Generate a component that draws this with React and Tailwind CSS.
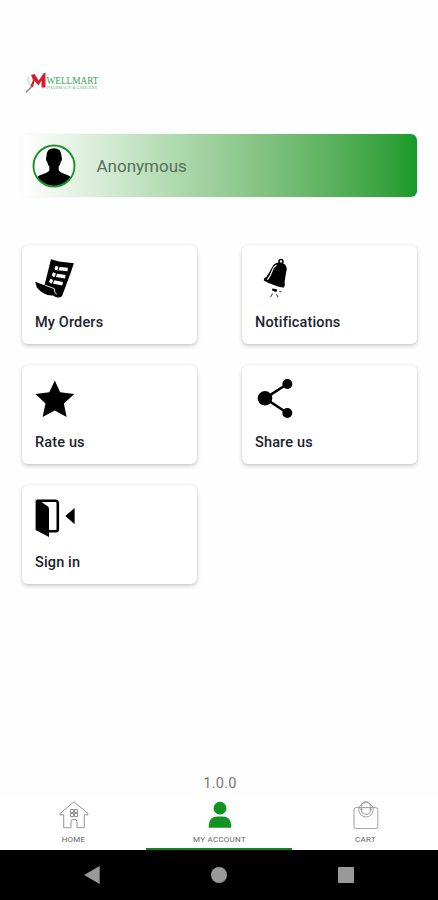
function OrdersIcon() {
  return (
    <svg viewBox="0 0 40 40" className="w-10 h-10">
      <path d="M16 1.3 24 3.6 38.8 5.2 36 14 28 35.5Q27 39.5 24 39.6 21 39.6 18 37.4 9 38.2 1.8 29.5L.2 23.8 9.5 27.3Z" />
      <path d="M10 27.2 19.3 30.6Q19 34.5 21.8 36.5" fill="none" stroke="white" strokeWidth="0.9" />
      <path d="m20.5 10.3 12.2 1.2M17.9 16.8l12.4 1.9M15 23.2l12.6 2.5" stroke="white" strokeWidth="3.5" />
      <path d="m21.9 8.2-1.4 3.2M19.2 14.8 17.8 18M16.5 21.3l-1.3 3" stroke="white" strokeWidth="2.5" />
      <path d="m24.4 8-1.5 4.4M21.7 15l-1.6 4.4M18.8 21.6l-1.5 4.4" stroke="black" strokeWidth="1.1" />
    </svg>
  )
}

function BellIcon() {
  return (
    <svg viewBox="0 0 40 40" className="w-10 h-10">
      <circle cx="26" cy="3.6" r="2" fill="none" stroke="black" strokeWidth="1.5" />
      <path d="M23.4 4.6Q28.8 4.2 31.2 8.2 32.3 10.5 31.2 14L29.8 22.5Q29.4 25 29.9 27.2L28.8 29.5Q25.5 29.7 20 27.5 13 25 8.7 22.4L9.2 20.2Q11.6 19.6 13 16.5L17.5 8.4Q19.5 5 23.4 4.6Z" />
      <path d="M21.5 7Q18.5 8.7 17.3 12.5 15.5 18 12.3 21.8" fill="none" stroke="white" strokeWidth="1.1" />
      <path d="m17 30.6 5.4 1-1 2.4-4-1.3Z" />
      <path d="m17.6 35.5-2 3.6M21.4 36.2l1.7 3M24.2 33.2l2.4.8" stroke="#555" strokeWidth="1.1" />
    </svg>
  )
}

function StarIcon() {
  return (
    <svg viewBox="0 0 40 40" className="w-10 h-10">
      <path d="m19.8 2.6 5.4 11.6 14.1 1.7-10.4 9.6 2.7 13.4-11.8-6.4-12.2 6.4 2.9-13.4L.5 15.9l13.8-1.7Z" />
    </svg>
  )
}

function ShareIcon() {
  return (
    <svg viewBox="0 0 40 40" className="w-10 h-10">
      <path d="M32.3 6 10 20.3 32.3 35" fill="none" stroke="black" strokeWidth="2.6" />
      <circle cx="10" cy="20.3" r="7.3" />
      <circle cx="32.3" cy="6" r="5" />
      <circle cx="32.3" cy="35" r="5" />
    </svg>
  )
}

function SignInIcon() {
  return (
    <svg viewBox="0 0 40 40" className="w-10 h-10">
      <path d="M2 2.8h18.5q2.3 0 2.3 2.5v26q0 2-2 2H14" fill="none" stroke="black" strokeWidth="2.6" />
      <path d="M.6 1.5 6.5 4 13 8.5Q14 9.5 14 11v28L.6 32Z" />
      <path d="M30.3 18 39.6 10v16.3Z" />
    </svg>
  )
}

function Logo() {
  return (
    <svg viewBox="0 0 90 30" className="w-[90px] h-[30px] overflow-visible">
      <path d="M3.5 4.5Q1.5 10 6.5 14M7 13.5.8 20" fill="none" stroke="#aaa" strokeWidth="0.7" />
      <path d="M7.5 14 1 20.3" stroke="#777" strokeWidth="1.1" />
      <path d="M6 3 9.6 2l4.1 6.6L18.6 1.2 20.5 1v14.5h-4V8.8l-3 4.6L9.6 9 8 15.2 5.5 14 8 8Z" fill="#d3202d" />
      <text x="21.5" y="11.5" fontSize="9.5" fill="#3ba35c" textLength="52" lengthAdjust="spacingAndGlyphs" fontFamily="Liberation Serif, serif">WELLMART</text>
      <text x="21.5" y="17.3" fontSize="5" fill="#5bb67b" textLength="51" lengthAdjust="spacingAndGlyphs" fontFamily="Liberation Serif, serif">PHARMACY &amp; GROCERY</text>
    </svg>
  )
}

function Avatar() {
  return (
    <svg viewBox="0 0 44 44" className="w-11 h-11">
      <defs>
        <clipPath id="avatar">
          <circle cx="22" cy="22" r="20.5" />
        </clipPath>
      </defs>
      <circle cx="22" cy="22" r="20.5" fill="white" />
      <path
        clipPath="url(#avatar)"
        d="M22 4.2c5.2 0 7.7 3.2 7.5 8.7.9.5.6 4.3-.8 5-.4 2.3-1.2 3.5-2 4.5v4c2 3 9.5 3.5 13.3 7.6V44H4V34c3.8-4.1 11.3-4.6 13.3-7.6v-4c-.8-1-1.6-2.2-2-4.5-1.4-.7-1.7-4.5-.8-5C14.3 7.4 16.8 4.2 22 4.2Z"
      />
      <circle cx="22" cy="22" r="20.5" fill="none" stroke="#159528" strokeWidth="1.9" />
    </svg>
  )
}

function HomeIcon() {
  return (
    <svg viewBox="0 0 30 28" className="w-[30px] h-7" fill="none" stroke="#777" strokeWidth="0.8">
      <path d="M4.7 13.8v12.9h7.3v-6q0-2.4 3-2.4t3 2.4v6h7.3V13.8h3.6v-1.4L15 .8 1.1 12.4v1.4Z" />
      <path d="M11.5 8.5h3v3h-3ZM15.5 8.5h3v3h-3ZM11.5 12.5h3v3h-3ZM15.5 12.5h3v3h-3Z" />
    </svg>
  )
}

function AccountIcon() {
  return (
    <svg viewBox="0 0 30 28" className="w-[30px] h-7" fill="#11941f">
      <circle cx="15" cy="7.2" r="6.4" />
      <path d="M3.8 26.8v-2.6q0-8.5 9-8.7h4.4q9 .2 9 8.7v2.6Z" />
    </svg>
  )
}

function CartIcon() {
  return (
    <svg viewBox="0 0 30 28" className="w-[30px] h-7" fill="none" stroke="#888" strokeWidth="0.8">
      <rect x="3" y="6.6" width="23.8" height="21" rx="2" />
      <circle cx="15" cy="8.8" r="7.2" />
      <path d="M10.4 6.5V9q0 4.3 4.6 4.3T19.6 9V6.5M10.6 5.5q0-4.8 4.4-4.8t4.4 4.8M9.2 8.3h2.4M18.4 8.3h2.4" />
    </svg>
  )
}

const cards = [
  { icon: <OrdersIcon />, label: 'My Orders' },
  { icon: <BellIcon />, label: 'Notifications' },
  { icon: <StarIcon />, label: 'Rate us' },
  { icon: <ShareIcon />, label: 'Share us' },
  { icon: <SignInIcon />, label: 'Sign in' },
]

const tabs = [
  { icon: <HomeIcon />, label: 'HOME' },
  { icon: <AccountIcon />, label: 'MY ACCOUNT', active: true },
  { icon: <CartIcon />, label: 'CART' },
]

export default function App() {
  return (
    <div className="flex h-[900px] w-[438px] flex-col overflow-hidden bg-[#fefefe] font-['Roboto',sans-serif]">
      <header className="pt-[72px] pl-[25px]">
        <Logo />
      </header>

      {/* Profile banner */}
      <div className="mt-8 ml-[22px] flex h-[63px] w-[395px] items-center rounded-md bg-linear-to-r from-white to-[#159a28] pl-[10px] shadow-[0_0_2px_rgba(0,0,0,0.08)]">
        <Avatar />
        <span className="ml-[20.5px] pt-px text-[17px] leading-6 text-[#56705a]">Anonymous</span>
      </div>

      {/* Menu cards */}
      <div className="mt-[48px] grid grid-cols-2 gap-x-[45px] gap-y-[21px] pr-[21px] pl-[22px]">
        {cards.map((card) => (
          <button
            key={card.label}
            className="flex h-[99px] flex-col items-start rounded-md bg-white pt-[13px] pl-[13px] shadow-[0_2px_4px_rgba(0,0,0,0.2),0_0_2px_rgba(0,0,0,0.08)]"
          >
            {card.icon}
            <span className="mt-[15px] text-[14.5px] leading-5 font-medium tracking-[0.15px] text-[#20232f]">{card.label}</span>
          </button>
        ))}
      </div>

      <p className="mt-auto mb-[2px] pl-[2px] text-center text-[14.5px] leading-6 tracking-[0.3px] text-[#777]">1.0.0</p>

      {/* Bottom tabs */}
      <nav className="grid h-[52px] shrink-0 grid-cols-3 bg-white">
        {tabs.map((tab) => (
          <div
            key={tab.label}
            className={`flex flex-col items-center border-b-2 pt-[3px] pl-[2px] ${tab.active ? 'border-[#11871b]' : 'border-transparent'}`}
          >
            {tab.icon}
            <span className="mt-[6px] -ml-px text-[8px] leading-[10px] tracking-[0.25px] text-[#666]">{tab.label}</span>
          </div>
        ))}
      </nav>

      {/* System navigation */}
      <div className="flex h-[50px] shrink-0 items-center justify-between bg-black pr-[84px] pl-[84px]">
        <svg viewBox="0 0 16 18" className="h-[18px] w-4" fill="#999">
          <path d="M0 9 15.7 0v18Z" />
        </svg>
        <div className="h-4 w-4 rounded-full bg-[#999]" />
        <div className="h-4 w-4 rounded-[1px] bg-[#999]" />
      </div>
    </div>
  )
}
